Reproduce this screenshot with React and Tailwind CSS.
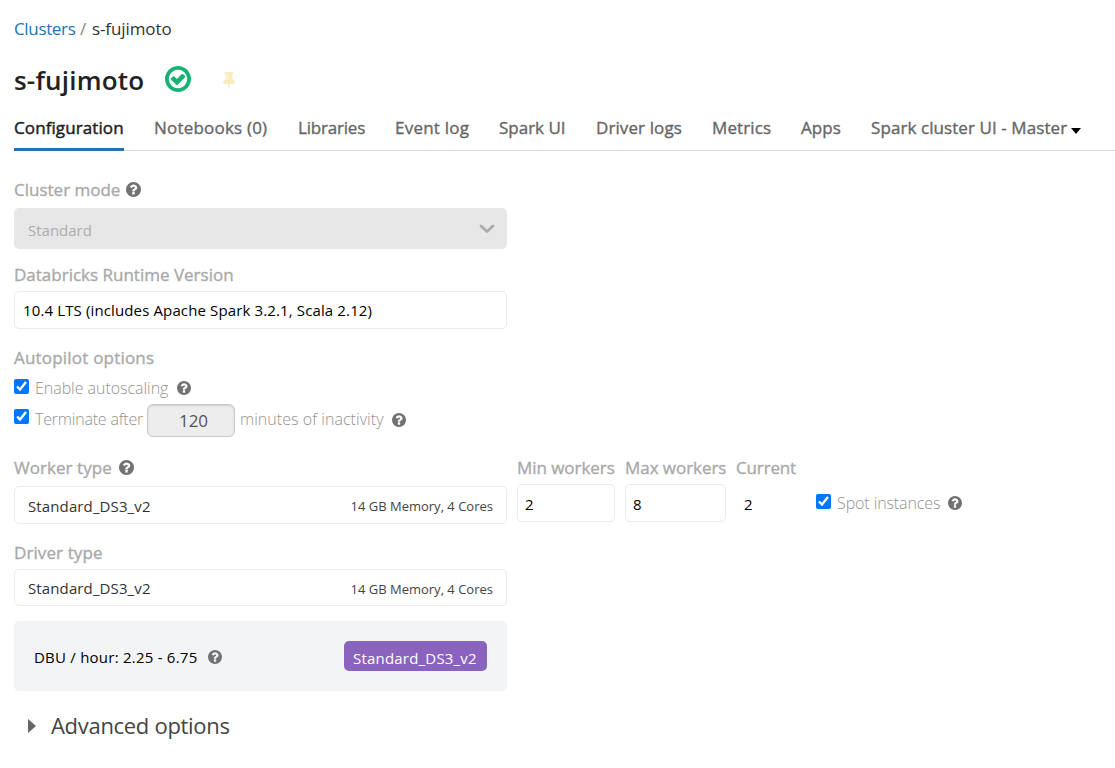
import clsx from "clsx";

const tabs = [
  { label: "Configuration", className: "w-[110px] tracking-[0.1px]", active: true },
  { label: "Notebooks (0)", className: "w-[114px] tracking-[0.2px]" },
  { label: "Libraries", className: "w-[67px] tracking-[-0.2px]" },
  { label: "Event log", className: "w-[74px] tracking-[0.22px]" },
  { label: "Spark UI", className: "w-[67px]" },
  { label: "Driver logs", className: "w-[86px] tracking-[0.1px]" },
  { label: "Metrics", className: "w-[59px] tracking-[0.1px]" },
  { label: "Apps", className: "w-[40px] tracking-[0.1px]" },
];

// =====================================================
// ICONS
// =====================================================

const HelpIcon = ({ className = "" }) => (
  <svg viewBox="128 128 1536 1536" fill="currentColor" className={clsx("shrink-0 text-[#727272]", className)}>
    <path d="M1024 1376v-192q0-14-9-23t-23-9h-192q-14 0-23 9t-9 23v192q0 14 9 23t23 9h192q14 0 23-9t9-23zm256-672q0-88-55.5-163t-138.5-116-170-41q-243 0-371 213-15 24 8 42l132 100q7 6 19 6 16 0 25-12 53-68 86-92 34-24 86-24 48 0 85.5 26t37.5 59q0 38-20 61t-68 45q-63 28-115.5 86.5t-52.5 125.5v36q0 14 9 23t23 9h192q14 0 23-9t9-23q0-19 21.5-49.5t54.5-49.5q32-18 49-28.5t46-35 44.5-48 28-60.5 12.5-81zm384 192q0 209-103 385.5t-279.5 279.5-385.5 103-385.5-103-279.5-279.5-103-385.5 103-385.5 279.5-279.5 385.5-103 385.5 103 279.5 279.5 103 385.5z" />
  </svg>
);

const RunningIcon = () => (
  <svg viewBox="128 128 1536 1536" fill="currentColor" className="ml-[21px] mb-0.5 size-[26px] shrink-0 text-[#15b371]">
    <path d="M1299 813l-422 422q-19 19-45 19t-45-19l-294-294q-19-19-19-45t19-45l102-102q19-19 45-19t45 19l147 147 275-275q19-19 45-19t45 19l102 102q19 19 19 45t-19 45zm141 83q0-148-73-273t-198-198-273-73-273 73-198 198-73 273 73 273 198 198 273 73 273-73 198-198 73-273zm224 0q0 209-103 385.5t-279.5 279.5-385.5 103-385.5-103-279.5-279.5-103-385.5 103-385.5 279.5-279.5 385.5-103 385.5 103 279.5 279.5 103 385.5z" />
  </svg>
);

const PinIcon = () => (
  <svg viewBox="320 128 1152 1664" fill="currentColor" className="ml-[32px] h-[17px] w-[12px] shrink-0 text-[#faebbd]">
    <path d="M800 864v-448q0-14-9-23t-23-9-23 9-9 23v448q0 14 9 23t23 9 23-9 9-23zm672 352q0 26-19 45t-45 19h-429l-51 483q-2 12-10.5 20.5t-20.5 8.5h-1q-27 0-32-27l-76-485h-404q-26 0-45-19t-19-45q0-123 78.5-221.5t177.5-98.5v-512q-52 0-90-38t-38-90 38-90 90-38h640q52 0 90 38t38 90-38 90-90 38v512q99 0 177.5 98.5t78.5 221.5z" />
  </svg>
);

// =====================================================
// FORM PARTS
// =====================================================

const Label = ({ children, className = "" }) => (
  <div
    className={clsx(
      "flex h-[21px] items-center text-[17px] whitespace-nowrap text-[#a9a9a9] [-webkit-text-stroke:0.35px]",
      className
    )}
  >
    {children}
  </div>
);

const Checkbox = ({ className = "" }) => (
  <input type="checkbox" defaultChecked className={clsx("size-[15px] shrink-0", className)} />
);

const InstanceType = ({ className = "" }) => (
  <div
    className={clsx(
      "flex w-[493px] items-center justify-between rounded-[5px] border border-[#ebebeb] px-[13px]",
      className
    )}
  >
    <span className="pt-0.5 text-[15px] tracking-[0.12px] text-[#333]">Standard_DS3_v2</span>
    <span className="pt-1 text-[13px] text-[#444]">14 GB Memory, 4 Cores</span>
  </div>
);

const WorkerCount = ({ value, className = "" }) => (
  <div className={clsx("flex h-[38px] items-center rounded-[5px] border border-[#ebebeb] px-[7px] pt-0.5 text-[15px] text-black", className)}>
    {value}
  </div>
);

// =====================================================
// PAGE
// =====================================================

const App = () => {
  return (
    <div className="h-[768px] overflow-hidden bg-white pl-[14px] font-['Open_Sans','Noto_Sans',sans-serif] whitespace-nowrap">
      {/* Breadcrumb */}
      <nav className="flex h-[57px] items-center text-[17px]">
        <a className="w-[66px] tracking-[-0.35px] text-[#2272b9]">Clusters</a>
        <span className="w-[12px] text-[#888]">/</span>
        <span className="tracking-[-0.1px] text-[#333]">s-fujimoto</span>
      </nav>

      {/* Title */}
      <div className="mt-[3px] flex h-10 items-center">
        <h1 className="w-[130px] text-[26px] font-semibold tracking-[0.2px] text-[#222]">s-fujimoto</h1>
        <RunningIcon />
        <PinIcon />
      </div>

      {/* Tabs */}
      <div className="mt-1 flex h-[47px] gap-[30px] border-b border-[#dadada]">
        {tabs.map((tab) => (
          <div
            key={tab.label}
            className={clsx(
              "h-[47px] shrink-0 border-b-[3px] pt-[11px] text-[17px] leading-[25px]",
              tab.active
                ? "border-[#2272b9] text-[#222] [-webkit-text-stroke:0.45px]"
                : "border-transparent text-[#666] [-webkit-text-stroke:0.35px]",
              tab.className
            )}
          >
            {tab.label}
          </div>
        ))}
        <div className="flex h-[47px] pt-[11px] text-[17px] leading-[25px] tracking-[0.08px] text-[#666] [-webkit-text-stroke:0.35px]">
          Spark cluster UI - Master
          <svg viewBox="0 0 10 6" className="mt-[13px] ml-1 h-[6px] w-[10px] text-black" fill="currentColor">
            <path d="M0 0h10L5 6z" />
          </svg>
        </div>
      </div>

      {/* Cluster mode */}
      <Label className="mt-[28px]">
        Cluster mode <HelpIcon className="ml-[6px] size-[15px]" />
      </Label>
      <div className="mt-2 flex h-[41px] w-[493px] items-center justify-between rounded-[5px] bg-[#e7e7e7] pr-[12px] pl-[14px]">
        <span className="pt-1 text-[15px] text-[#adadad]">Standard</span>
        <svg viewBox="0 0 16 10" className="h-[10px] w-4 text-[#ababab]" fill="none" stroke="currentColor" strokeWidth="2.8" strokeLinecap="round" strokeLinejoin="round">
          <path d="M2 2l6 5.6L14 2" />
        </svg>
      </div>

      {/* Runtime */}
      <Label className="mt-[15px]">Databricks Runtime Version</Label>
      <div className="mt-1.5 flex h-[38px] w-[493px] items-center rounded-[5px] border border-[#ebebeb] px-2 text-[15px] tracking-[0.13px] text-black">
        10.4 LTS (includes Apache Spark 3.2.1, Scala 2.12)
      </div>

      {/* Autopilot */}
      <Label className="mt-[18px] tracking-[0.2px]">Autopilot options</Label>
      <div className="mt-[10px] flex h-[21px] items-center text-[16px] font-light text-[#929292]">
        <Checkbox className="mr-[6px] mb-1" />
        <span className="pb-0.5 tracking-[-0.04px]">Enable autoscaling</span>
        <HelpIcon className="mb-px ml-[9px] size-[14px]" />
      </div>
      <div className="mt-[5px] flex h-[33px] items-center text-[16px] font-light text-[#929292]">
        <Checkbox className="mr-[6px] mb-2" />
        <span className="w-[112px] pb-[3px] tracking-[-0.2px]">Terminate after</span>
        <div className="flex h-[33px] w-[88px] items-center justify-center rounded-[6px] border border-[#c8c8c8] bg-[#ededed] pt-px pl-[5px] text-[17px] font-normal text-[#555] shadow-[inset_0_1px_2px_rgba(0,0,0,0.12)]">
          120
        </div>
        <span className="ml-[5px] pb-[3px] tracking-[0.05px]">minutes of inactivity</span>
        <HelpIcon className="mb-px ml-[8px] size-[14px]" />
      </div>

      {/* Workers */}
      <div className="mt-5 flex gap-[10px]">
        <div>
          <Label className="tracking-[0.05px]">
            Worker type <HelpIcon className="ml-[7px] size-[15px]" />
          </Label>
          <InstanceType className="mt-2 h-[38px]" />
        </div>
        <div className="w-[98px]">
          <Label className="tracking-[-0.05px]">Min workers</Label>
          <WorkerCount value="2" className="mt-1.5" />
        </div>
        <div className="w-[101px]">
          <Label className="tracking-[-0.05px]">Max workers</Label>
          <WorkerCount value="8" className="mt-1.5" />
        </div>
        <div className="w-[70px]">
          <Label className="tracking-[-0.15px]">Current</Label>
          <WorkerCount value="2" className="mt-1.5 border-transparent" />
        </div>
        <div className="mt-[36px] flex h-[21px] items-center text-[16px] font-light text-[#929292]">
          <Checkbox className="mr-[6px] mb-1" />
          <span className="pb-0.5 tracking-[-0.1px]">Spot instances</span>
          <HelpIcon className="mb-px ml-[8px] size-[14px]" />
        </div>
      </div>

      {/* Driver */}
      <Label className="mt-[18px] tracking-[0.1px]">Driver type</Label>
      <InstanceType className="mt-1.5 h-[37px]" />

      {/* DBU summary */}
      <div className="mt-[15px] flex h-[70px] w-[493px] items-center justify-between rounded-[5px] bg-[#f3f4f6] px-5">
        <div className="flex items-center pt-0.5 text-[15px] tracking-[0.23px] text-black">
          DBU / hour: 2.25 - 6.75
          <HelpIcon className="ml-[11px] size-[14px]" />
        </div>
        <div className="flex h-[30px] w-[143px] items-center rounded-[5px] bg-[#8a63be] pt-1 pl-[9px] text-[15px] tracking-[0.2px] text-white">
          Standard_DS3_v2
        </div>
      </div>

      {/* Advanced options */}
      <div className="mt-[19px] flex h-8 items-center pl-[14px] text-[22px] tracking-[-0.3px] text-[#444]">
        <svg viewBox="0 0 8 14" className="mr-[15px] h-[14px] w-2 text-[#666]" fill="currentColor">
          <path d="M0 0l8 7-8 7z" />
        </svg>
        <span className="pb-0.5">Advanced options</span>
      </div>
    </div>
  );
};

export default App;
